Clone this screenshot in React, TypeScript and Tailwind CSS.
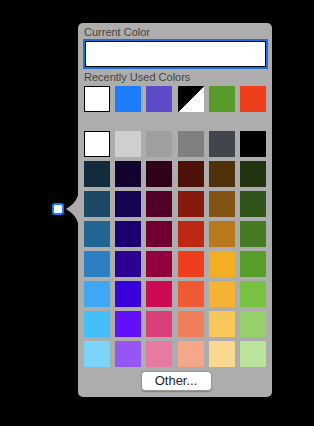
const recent = ['#ffffff', '#1b7cfe', '#5c4ac7', 'split', '#579b2b', '#ee3e1c'];

const palette = [
  ['#ffffff', '#d0d0d0', '#a0a0a0', '#808080', '#41464c', '#000000'],
  ['#122c3d', '#12042f', '#30001b', '#4e1108', '#4e320c', '#20340f'],
  ['#1b4865', '#150353', '#51002a', '#851a0d', '#815314', '#31541b'],
  ['#216592', '#1c0071', '#710032', '#bd2814', '#b8791c', '#457b23'],
  ['#2c7fc2', '#2c0091', '#930040', '#ee3e1c', '#f3af23', '#579e2b'],
  ['#3fa8f5', '#3a00da', '#ce0a55', '#ef5a34', '#f4b335', '#77c241'],
  ['#43c0f9', '#6210fa', '#db3f7a', '#f07e5a', '#f7c75a', '#95d06b'],
  ['#7bd5fa', '#9457f3', '#e67aa0', '#f3a88a', '#f9d88f', '#bbe39b'],
];

function Swatch({ color }: { color: string }) {
  if (color === 'split') {
    return <div className="h-[26px] w-[26px] bg-[linear-gradient(to_bottom_right,#000_50%,#fff_50%)]" />;
  }
  const white = color === '#ffffff';
  return (
    <div
      className={white ? 'h-[26px] w-[26px] border border-black' : 'h-[26px] w-[26px]'}
      style={{ backgroundColor: color }}
    />
  );
}

export default function App() {
  return (
    <div className="flex h-[426px] w-[314px] items-start bg-black pl-[52px] pt-[23px] font-['Liberation_Sans',Arial,sans-serif]">
      {/* anchor swatch */}
      <div className="mt-[180px] h-[12px] w-[12px] rounded-[3px] border-2 border-[#1a7bff] bg-white" />

      {/* popover arrow */}
      <svg className="ml-[2px] mt-[172px]" width="12" height="28" viewBox="0 0 12 28">
        <path d="M12 0 C10 7 5 11 0 14 C5 17 10 21 12 28 Z" fill="#adadad" />
      </svg>

      <div className="flex w-[194px] flex-col rounded-[5px] bg-[#adadad] px-[5px] pb-[6px] pt-[3px]">
        <div className="pl-[1px] text-[11px] leading-[13px] text-[#444]">Current Color</div>
        <div className="h-[30px] w-[185px] border-2 border-[#1a6fdc]">
          <div className="h-full w-full border border-black bg-white" />
        </div>

        <div className="mt-[2px] pl-[1px] text-[11px] leading-[13px] text-[#444]">Recently Used Colors</div>
        <div className="ml-[1px] mt-[2px] grid w-[182px] grid-cols-[repeat(6,26px)] justify-between">
          {recent.map((c, i) => (
            <Swatch key={i} color={c} />
          ))}
        </div>

        <div className="ml-[1px] mt-[19px] grid w-[182px] grid-cols-[repeat(6,26px)] justify-between gap-y-[4px]">
          {palette.flat().map((c, i) => (
            <Swatch key={i} color={c} />
          ))}
        </div>

        <div className="mt-[4px] flex justify-center">
          <button className="ml-[2px] h-[20px] w-[71px] rounded-[4px] border border-[#999] bg-white text-[13px] leading-[18px] text-[#1e1e1e] shadow-[0_0.5px_1px_rgba(0,0,0,0.25)]">
            Other...
          </button>
        </div>
      </div>
    </div>
  );
}
